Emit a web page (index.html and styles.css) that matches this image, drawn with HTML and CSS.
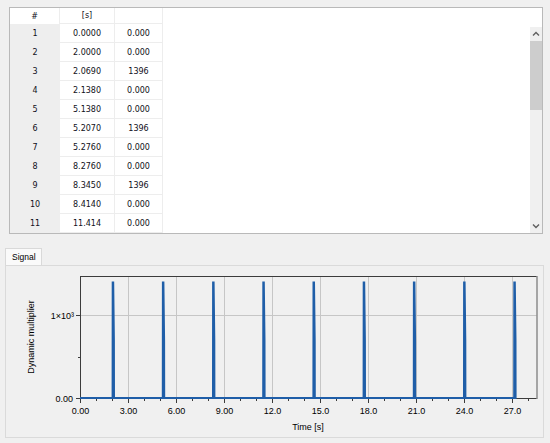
FILE: index.html
```html
<!DOCTYPE html>
<html>
<head>
<meta charset="utf-8">
<link rel="stylesheet" href="styles.css">
</head>
<body>
<div class="app">
  <div class="grid-panel">
    <div class="table">
      <div class="row head">
        <div class="c rh">#</div><div class="c">[s]</div><div class="c"></div><div class="c rest"></div>
      </div>
      <div class="row"><div class="c rh">1</div><div class="c">0.0000</div><div class="c">0.000</div><div class="c rest"></div></div>
      <div class="row"><div class="c rh">2</div><div class="c">2.0000</div><div class="c">0.000</div><div class="c rest"></div></div>
      <div class="row"><div class="c rh">3</div><div class="c">2.0690</div><div class="c">1396</div><div class="c rest"></div></div>
      <div class="row"><div class="c rh">4</div><div class="c">2.1380</div><div class="c">0.000</div><div class="c rest"></div></div>
      <div class="row"><div class="c rh">5</div><div class="c">5.1380</div><div class="c">0.000</div><div class="c rest"></div></div>
      <div class="row"><div class="c rh">6</div><div class="c">5.2070</div><div class="c">1396</div><div class="c rest"></div></div>
      <div class="row"><div class="c rh">7</div><div class="c">5.2760</div><div class="c">0.000</div><div class="c rest"></div></div>
      <div class="row"><div class="c rh">8</div><div class="c">8.2760</div><div class="c">0.000</div><div class="c rest"></div></div>
      <div class="row"><div class="c rh">9</div><div class="c">8.3450</div><div class="c">1396</div><div class="c rest"></div></div>
      <div class="row"><div class="c rh">10</div><div class="c">8.4140</div><div class="c">0.000</div><div class="c rest"></div></div>
      <div class="row"><div class="c rh">11</div><div class="c">11.414</div><div class="c">0.000</div><div class="c rest"></div></div>
    </div>
    <div class="vscroll">
      <div class="vs-spacer"></div>
      <div class="vs-track">
        <div class="vs-btn"><svg width="8" height="6" viewBox="0 0 8 6"><polyline points="1,4.5 4,1.5 7,4.5" fill="none" stroke="#606060" stroke-width="1.4"/></svg></div>
        <div class="vs-thumb"></div>
        <div class="vs-fill"></div>
        <div class="vs-btn"><svg width="8" height="6" viewBox="0 0 8 6"><polyline points="1,1.5 4,4.5 7,1.5" fill="none" stroke="#606060" stroke-width="1.4"/></svg></div>
      </div>
    </div>
  </div>

  <div class="tabs"><div class="tab">Signal</div></div>
  <div class="pane">
    <svg class="chart" width="537" height="171" viewBox="0 0 537 171">
      <g stroke="#c6c6c6" stroke-width="1" shape-rendering="crispEdges">
        <line x1="122.5" y1="10" x2="122.5" y2="132"/>
        <line x1="170.5" y1="10" x2="170.5" y2="132"/>
        <line x1="218.5" y1="10" x2="218.5" y2="132"/>
        <line x1="266.5" y1="10" x2="266.5" y2="132"/>
        <line x1="314.5" y1="10" x2="314.5" y2="132"/>
        <line x1="362.5" y1="10" x2="362.5" y2="132"/>
        <line x1="410.5" y1="10" x2="410.5" y2="132"/>
        <line x1="458.5" y1="10" x2="458.5" y2="132"/>
        <line x1="506.5" y1="10" x2="506.5" y2="132"/>
        <line x1="74" y1="49.5" x2="531" y2="49.5"/>
      </g>
      <g stroke="#3c3c3c" stroke-width="1" shape-rendering="crispEdges">
        <line x1="74" y1="10.5" x2="531" y2="10.5"/>
        <line x1="74.5" y1="10" x2="74.5" y2="133"/>
        <line x1="74" y1="132.5" x2="531" y2="132.5"/>
        <line x1="70" y1="132.5" x2="74" y2="132.5"/>
        <line x1="70" y1="49.5" x2="74" y2="49.5"/>
        <line x1="72" y1="91.5" x2="74" y2="91.5"/>
      </g>
      <line x1="531" y1="10" x2="531" y2="133" stroke="#8c8c8c" stroke-width="1.5"/>
      <g stroke="#3c3c3c" stroke-width="1" shape-rendering="crispEdges">
        <line x1="74.5" y1="133" x2="74.5" y2="137"/>
        <line x1="90.5" y1="133" x2="90.5" y2="135"/>
        <line x1="106.5" y1="133" x2="106.5" y2="135"/>
        <line x1="122.5" y1="133" x2="122.5" y2="137"/>
        <line x1="138.5" y1="133" x2="138.5" y2="135"/>
        <line x1="154.5" y1="133" x2="154.5" y2="135"/>
        <line x1="170.5" y1="133" x2="170.5" y2="137"/>
        <line x1="186.5" y1="133" x2="186.5" y2="135"/>
        <line x1="202.5" y1="133" x2="202.5" y2="135"/>
        <line x1="218.5" y1="133" x2="218.5" y2="137"/>
        <line x1="234.5" y1="133" x2="234.5" y2="135"/>
        <line x1="250.5" y1="133" x2="250.5" y2="135"/>
        <line x1="266.5" y1="133" x2="266.5" y2="137"/>
        <line x1="282.5" y1="133" x2="282.5" y2="135"/>
        <line x1="298.5" y1="133" x2="298.5" y2="135"/>
        <line x1="314.5" y1="133" x2="314.5" y2="137"/>
        <line x1="330.5" y1="133" x2="330.5" y2="135"/>
        <line x1="346.5" y1="133" x2="346.5" y2="135"/>
        <line x1="362.5" y1="133" x2="362.5" y2="137"/>
        <line x1="378.5" y1="133" x2="378.5" y2="135"/>
        <line x1="394.5" y1="133" x2="394.5" y2="135"/>
        <line x1="410.5" y1="133" x2="410.5" y2="137"/>
        <line x1="426.5" y1="133" x2="426.5" y2="135"/>
        <line x1="442.5" y1="133" x2="442.5" y2="135"/>
        <line x1="458.5" y1="133" x2="458.5" y2="137"/>
        <line x1="474.5" y1="133" x2="474.5" y2="135"/>
        <line x1="490.5" y1="133" x2="490.5" y2="135"/>
        <line x1="506.5" y1="133" x2="506.5" y2="137"/>
        <line x1="522.5" y1="133" x2="522.5" y2="135"/>
      </g>
      <path fill="none" stroke="#1f5ea8" stroke-width="1.8" stroke-linejoin="miter"
        d="M74,132 L106.5,132 L106.6,16.5 L107.3,16.5 L108,74 L108.1,132
           L156.7,132 L156.8,16.5 L157.5,16.5 L158.2,74 L158.3,132
           L206.9,132 L207,16.5 L207.7,16.5 L208.4,74 L208.5,132
           L257.1,132 L257.2,16.5 L257.9,16.5 L258.6,74 L258.7,132
           L307.3,132 L307.4,16.5 L308.1,16.5 L308.8,74 L308.9,132
           L357.5,132 L357.6,16.5 L358.3,16.5 L359,74 L359.1,132
           L407.7,132 L407.8,16.5 L408.5,16.5 L409.2,74 L409.3,132
           L457.9,132 L458,16.5 L458.7,16.5 L459.4,74 L459.5,132
           L508.1,132 L508.2,16.5 L508.9,16.5 L509.6,74 L509.7,132 L510.5,132"/>
      <g class="lbl" text-anchor="end">
        <text x="68" y="52.5">1×10³</text>
        <text x="67" y="135.5">0.00</text>
      </g>
      <g class="lbl" text-anchor="middle">
        <text x="74.5" y="148">0.00</text>
        <text x="122.5" y="148">3.00</text>
        <text x="170.5" y="148">6.00</text>
        <text x="218.5" y="148">9.00</text>
        <text x="266.5" y="148">12.0</text>
        <text x="314.5" y="148">15.0</text>
        <text x="362.5" y="148">18.0</text>
        <text x="410.5" y="148">21.0</text>
        <text x="458.5" y="148">24.0</text>
        <text x="506.5" y="148">27.0</text>
        <text x="302" y="164">Time [s]</text>
        <text transform="translate(27.5,71) rotate(-90)">Dynamic multiplier</text>
      </g>
    </svg>
  </div>
</div>
</body>
</html>
```
FILE: styles.css
```css
html, body {
  margin: 0;
  padding: 0;
  background: #f0f0f0;
}
.app {
  width: 550px;
  height: 443px;
  padding-top: 7px;
  box-sizing: border-box;
  font-family: "DejaVu Sans", "Liberation Sans", sans-serif;
}
.grid-panel {
  margin-left: 9px;
  width: 534px;
  height: 227px;
  box-sizing: border-box;
  border: 1px solid #b9b9b9;
  background: #fff;
  display: flex;
}
.table {
  flex: 1;
  display: flex;
  flex-direction: column;
}
.row {
  display: grid;
  grid-template-columns: 50px 55px 48px 1fr;
  height: 19px;
}
.row.head {
  height: 16px;
}
.c {
  display: flex;
  align-items: center;
  justify-content: center;
  font-size: 8px;
  color: #101020;
  border-right: 1px solid #ededed;
  border-bottom: 1px solid #ededed;
  box-sizing: border-box;
}
.c.rest {
  border: none;
}
.row .rh {
  background: #eeeeee;
  border-right: none;
  border-bottom: none;
}
.row.head .rh {
  background: #fff;
  border-right: 1px solid #ededed;
}
.vscroll {
  width: 12px;
  display: flex;
  flex-direction: column;
}
.vs-spacer {
  height: 19px;
}
.vs-track {
  flex: 1;
  background: #f0f0f0;
  display: flex;
  flex-direction: column;
}
.vs-btn {
  height: 14px;
  display: flex;
  align-items: center;
  justify-content: center;
}
.vs-thumb {
  height: 69px;
  background: #cdcdcd;
}
.vs-fill {
  flex: 1;
}
.tabs {
  margin-top: 14px;
  margin-left: 5px;
  display: flex;
}
.tab {
  width: 37px;
  height: 17px;
  box-sizing: border-box;
  border: 1px solid #d9d9d9;
  border-bottom: none;
  background: #fafafa;
  font-family: "Liberation Sans", sans-serif;
  font-size: 8.5px;
  color: #000;
  padding-left: 6px;
  display: flex;
  align-items: center;
}
.pane {
  margin-left: 5px;
  width: 539px;
  height: 173px;
  box-sizing: border-box;
  border: 1px solid #dadada;
  background: #f0f0f0;
}
.chart {
  display: block;
}
.lbl {
  font-family: "Liberation Sans", sans-serif;
  font-size: 9px;
  fill: #000;
}
```
